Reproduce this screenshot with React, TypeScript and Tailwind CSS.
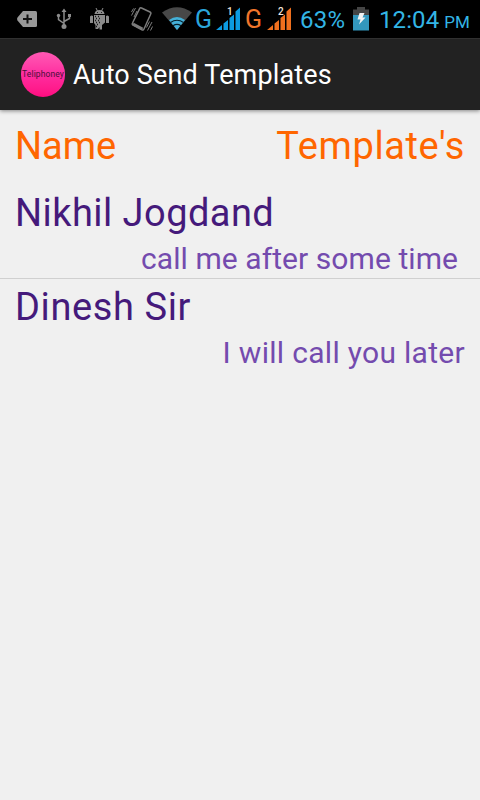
const rows = [
  { name: "Nikhil Jogdand", template: "call me after some time", pad: "pr-[22px]", nameSpacing: "tracking-[0.45px]", spacing: "tracking-[0.07px]" },
  { name: "Dinesh Sir", template: "I will call you later", pad: "pr-[15px]", nameSpacing: "tracking-[0.6px]", spacing: "tracking-[0.3px]" },
];

function Signal({ sim, color }: { sim: string; color: string }) {
  return (
    <svg className="shrink-0" width="26" height="26" viewBox="0 0 26 26" fill={color}>
      <path d="M1 24L7 19v5zM8.500 17.500l4.500-3.500v10h-4.500zM14.500 12l4.500-3.500v15.500h-4.500zM20.500 5.500l4.500-4v22.500h-4.500z" />
      <text x="12" y="9" fontSize="10" fontWeight="500" fontFamily="Roboto, sans-serif" fill="#f4e4dc">
        {sim}
      </text>
    </svg>
  );
}

function StatusBar() {
  return (
    <div className="flex h-[38px] items-center bg-black">
      {/* notifications */}
      <svg className="ml-[17px] shrink-0" width="20" height="16" viewBox="0 0 20 16">
        <path d="M6 0h12.500q1.500 0 1.500 1.500v13q0 1.500-1.500 1.500H6L0.500 9.500Q-.3 8 .5 6.500z" fill="#989898" />
        <path d="M10.500 3.500v9M6 8h9" stroke="#111" strokeWidth="2" />
      </svg>
      <svg className="ml-[19px] shrink-0" width="16" height="22" viewBox="0 0 16 22" fill="none" stroke="#8c8c8c" strokeWidth="1.500">
        <path d="M8 3v15M2.500 8v3.500L8 15.500M13.500 8v2.500L8 13.500" />
        <path d="M5.500 4L8 .5 10.500 4zM12 6h3v3h-3z" fill="#8c8c8c" stroke="none" />
        <circle cx="2.500" cy="7.500" r="1.700" fill="#8c8c8c" stroke="none" />
        <circle cx="8" cy="18.500" r="2.500" fill="#8c8c8c" stroke="none" />
      </svg>
      <svg className="ml-[18px] shrink-0" width="19" height="22" viewBox="0 0 19 22">
        <path d="M4.500 6Q5 2 9.500 2T14.500 6zM4 7h11v7.500L12 17v4.500H9.500V19L8 21H5.500V17L4 15zM0 8.500Q1.500 7 3 8v7H0zM16 8q1.500-1 3 .5V15h-3z" fill="#8c8c8c" />
        <path d="M6 0l1.500 3M13 0l-1.500 3" stroke="#8c8c8c" />
        <path d="M5 8.500h1M8 8.500h1M6 10.500h1M9 10.500h1M5 12.500h1M8 12.500h1M6 14.500h1M9 14.500h1M7 16.500h1M6 18.500h1" stroke="#1a1a1a" strokeWidth="1.400" />
        <path d="M7 4.500h1M11 4.500h1" stroke="#222" />
      </svg>

      {/* system icons */}
      <svg className="ml-[22px] shrink-0" width="22" height="25" viewBox="0 0 22 25" fill="none" stroke="#7c7c7c">
        <path d="M10.500 1L19 5Q20.300 5.700 19.700 7L13 22Q12.300 23.500 11 22.800L2 18Q.8 17.300 1.500 16L8.500 1.800Q9.200.4 10.500 1z" strokeWidth="1.500" />
        <path d="M2 17l9.500 5" strokeWidth="3" />
        <path d="M.5 8.500L4.500 1M3 10L6 4M.5 5L2.500 1.500M21 15l-4.500 8.500M18.500 14.500l-3 6M21.500 19.500l-2 4" />
      </svg>
      <svg className="mb-px ml-[9px] shrink-0" width="30" height="23" viewBox="0 0 30 23">
        <path d="M0 5.500Q15-5 30 5.500L15 23z" fill="#484848" />
        <path d="M7 13Q15 7 23 13L15 23z" fill="#44b0d8" />
        <path d="M8.500 15.500Q15 11 21.500 15.500M11 18.700Q15 16 19 18.700" fill="none" stroke="#06202b" strokeWidth="1.200" />
      </svg>
      <span className="ml-[3px] w-[20px] text-[25px] leading-none text-[#2ba6dc]">G</span>
      <Signal sim="1" color="#0c9be0" />
      <span className="ml-[4px] w-[21px] text-[25px] leading-none text-[#f0762b]">G</span>
      <Signal sim="2" color="#f0701e" />
      <span className="ml-[8px] w-[46px] whitespace-nowrap pt-px text-[24px] leading-none tracking-[0.3px] text-[#33b5e5]">63%</span>
      <svg className="mb-px ml-[7px] shrink-0" width="16" height="24" viewBox="0 0 16 24">
        <path d="M4 0h8v2.500h4V8H0V2.500h4z" fill="#454545" />
        <path d="M0 8h16v15.500H0z" fill="#3397bd" />
        <path d="M6.500 6h5L9.500 10.500h3L6 17.500 7.500 12.500H4.500z" fill="#f2f2f2" />
      </svg>
      <span className="ml-[10px] whitespace-nowrap pt-px text-[24px] leading-none tracking-[0.1px] text-[#33b5e5]">
        12:04<span className="ml-[5px] text-[17px] tracking-normal">PM</span>
      </span>
    </div>
  );
}

export default function App() {
  return (
    <main className="h-[800px] w-[480px] overflow-hidden bg-[#f0f0f0] font-['Roboto',sans-serif]">
      <StatusBar />

      {/* action bar */}
      <header className="flex h-[72px] items-center border-t border-[#303030] bg-[#222222] shadow-[0_1px_4px_rgba(0,0,0,0.45)]">
        <div className="ml-[21px] flex h-[45px] w-[44px] items-center justify-center rounded-full bg-linear-to-b from-[#ff58b4] via-[#ff2ba0] to-[#ff0a80]">
          <span className="text-[8.500px] leading-none tracking-[0.1px] text-[#4a1038]">Teliphoney</span>
        </div>
        <h1 className="ml-[8px] whitespace-nowrap pt-[2px] text-[27px] leading-none tracking-[0.15px] text-white">Auto Send Templates</h1>
      </header>

      <section className="mb-[3px] flex h-[72px] items-center justify-between px-[15px] text-[38px] leading-none text-[#ff6600]">
        <span>Name</span>
        <span className="tracking-[0.6px]">Template's</span>
      </section>

      <ul>
        {rows.map((row) => (
          <li key={row.name} className="h-[94px] border-b border-[#d0d0d0] whitespace-nowrap last:border-transparent">
            <p className={`h-[56px] pl-[15px] text-[38px] leading-[56px] text-[#451a7b] ${row.nameSpacing}`}>{row.name}</p>
            <p className={`h-[36px] text-right text-[30px] leading-[36px] text-[#744bae] ${row.pad} ${row.spacing}`}>{row.template}</p>
          </li>
        ))}
      </ul>
    </main>
  );
}
